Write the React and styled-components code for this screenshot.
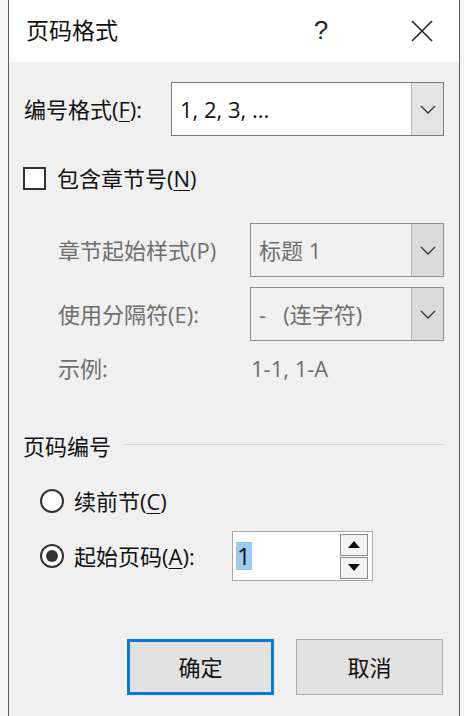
import React from 'react';
import styled, { createGlobalStyle } from 'styled-components';

const GlobalStyle = createGlobalStyle`
  html, body {
    margin: 0;
    padding: 0;
    background: #f7f7f7;
  }
  body {
    font-family: "Open Sans", "Noto Sans CJK SC", sans-serif;
    color: #111;
  }
`;

const Page = styled.div`
  display: flex;
  height: 716px;
  overflow: hidden;
`;

const Strip = styled.div`
  width: ${(p) => p.$width}px;
  flex-shrink: 0;
  background: #f5f5f5;
`;

const Dialog = styled.div`
  width: 450px;
  flex-shrink: 0;
  border-left: 1px solid #5c5c5c;
  border-right: 1px solid #5c5c5c;
  background: #f0f0f0;
  display: flex;
  flex-direction: column;
  font-size: 22px;
  line-height: 1.2;
`;

const TitleBar = styled.div`
  height: 62px;
  background: #ffffff;
  display: flex;
  align-items: center;
  padding-left: 17px;
`;

const Title = styled.div`
  flex: 1;
  font-size: 23px;
  color: #111;
`;

const TitleButton = styled.div`
  width: 46px;
  height: 46px;
  display: flex;
  align-items: center;
  justify-content: center;
  margin-right: ${(p) => p.$mr || 0}px;
  font-family: "Liberation Sans", sans-serif;
  font-size: 26px;
  color: #222;
`;

const Row = styled.div`
  display: flex;
  align-items: center;
  height: ${(p) => p.$h || 30}px;
  margin-top: ${(p) => p.$mt || 0}px;
  padding-left: ${(p) => p.$pl || 15}px;
  padding-right: 15px;
`;

const Label = styled.div`
  width: ${(p) => (p.$w ? `${p.$w}px` : 'auto')};
  flex-shrink: 0;
  white-space: nowrap;
  color: ${(p) => (p.$disabled ? '#6e6e6e' : '#111')};
`;

const Key = styled.span`
  text-decoration: underline;
  text-underline-offset: 3px;
  text-decoration-thickness: 1px;
`;

const Combo = styled.div`
  width: ${(p) => p.$w}px;
  height: 100%;
  box-sizing: border-box;
  display: flex;
  border: 1.5px solid ${(p) => (p.$disabled ? '#8e8e8e' : '#7a7a7a')};
  background: ${(p) => (p.$disabled ? '#f0f0f0' : '#ffffff')};
`;

const ComboText = styled.div`
  flex: 1;
  display: flex;
  align-items: center;
  padding-left: 8px;
  font-size: 22px;
  white-space: pre;
  color: ${(p) => (p.$disabled ? '#6e6e6e' : '#111')};
`;

const DropButton = styled.div`
  width: 31px;
  display: flex;
  align-items: center;
  justify-content: center;
  background: ${(p) => (p.$disabled ? '#dadada' : '#e3e3e3')};
  border-left: 1px solid #b5b5b5;
`;

const CheckBox = styled.div`
  width: 23px;
  height: 23px;
  box-sizing: border-box;
  border: 2px solid #333;
  background: #fff;
  margin-right: 11px;
`;

const Radio = styled.div`
  width: 24px;
  height: 24px;
  box-sizing: border-box;
  border: 2px solid #333;
  border-radius: 50%;
  background: #fff;
  display: flex;
  align-items: center;
  justify-content: center;
  margin-right: 10px;
  flex-shrink: 0;

  &::after {
    content: '';
    display: ${(p) => (p.$checked ? 'block' : 'none')};
    width: 12px;
    height: 12px;
    border-radius: 50%;
    background: #333;
  }
`;

const Section = styled.div`
  display: flex;
  align-items: center;
  height: 30px;
  margin-top: 48px;
  padding-left: 14px;
  padding-right: 15px;
`;

const Rule = styled.div`
  flex: 1;
  height: 1px;
  background: #d6d6d6;
  margin-left: 14px;
  margin-top: -4px;
`;

const Spinner = styled.div`
  width: 141px;
  height: 100%;
  box-sizing: border-box;
  border: 1px solid #a8a8a8;
  background: #fff;
  display: flex;
  align-items: center;
  padding: 0 4px 0 3px;
`;

const SpinValue = styled.div`
  flex: 1;
  display: flex;
  align-items: center;
`;

const Selected = styled.span`
  background: #9ccbf0;
  color: #111;
  font-size: 24px;
  line-height: 1.15;
  padding: 0 1px;
`;

const SpinButtons = styled.div`
  display: flex;
  flex-direction: column;
  gap: 1px;
`;

const SpinButton = styled.div`
  width: 28px;
  height: 22px;
  box-sizing: border-box;
  border: 1px solid #8c8c8c;
  background: #f2f2f2;
  display: flex;
  align-items: center;
  justify-content: center;
`;

const Footer = styled.div`
  display: flex;
  justify-content: flex-end;
  gap: 22px;
  margin-top: 58px;
  padding-right: 16px;
`;

const Button = styled.div`
  width: 147px;
  height: 56px;
  box-sizing: border-box;
  display: flex;
  align-items: center;
  justify-content: center;
  background: #e1e1e1;
  border: ${(p) => (p.$primary ? '3px solid #0a78d7' : '1px solid #adadad')};
  font-size: 22px;
  color: #111;
`;

const Chevron = () => (
  <svg width="16" height="9" viewBox="0 0 16 9">
    <path d="M1 1 L8 8 L15 1" fill="none" stroke="#333" strokeWidth="1.3" />
  </svg>
);

const CloseIcon = () => (
  <svg width="22" height="22" viewBox="0 0 22 22">
    <path d="M1 1 L21 21 M21 1 L1 21" stroke="#222" strokeWidth="1.6" />
  </svg>
);

const Triangle = ({ down }) => (
  <svg width="12" height="7" viewBox="0 0 12 7">
    <path d={down ? 'M0 0 L12 0 L6 7 Z' : 'M0 7 L12 7 L6 0 Z'} fill="#111" />
  </svg>
);

const App = () => {
  return (
    <>
      <GlobalStyle />
      <Page>
        <Strip $width={8} />

        <Dialog>
          <TitleBar>
            <Title>页码格式</Title>
            <TitleButton $mr={55}>?</TitleButton>
            <TitleButton $mr={14}>
              <CloseIcon />
            </TitleButton>
          </TitleBar>

          <Row $h={54} $mt={20}>
            <Label $w={147}>
              编号格式(<Key>F</Key>):
            </Label>
            <Combo $w={273}>
              <ComboText>1, 2, 3, ...</ComboText>
              <DropButton>
                <Chevron />
              </DropButton>
            </Combo>
          </Row>

          <Row $mt={27} $pl={14}>
            <CheckBox />
            <Label>
              包含章节号(<Key>N</Key>)
            </Label>
          </Row>

          <Row $h={54} $mt={30} $pl={49}>
            <Label $w={192} $disabled>
              章节起始样式(P)
            </Label>
            <Combo $w={194} $disabled>
              <ComboText $disabled>标题 1</ComboText>
              <DropButton $disabled>
                <Chevron />
              </DropButton>
            </Combo>
          </Row>

          <Row $h={54} $mt={10} $pl={49}>
            <Label $w={192} $disabled>
              使用分隔符(E):
            </Label>
            <Combo $w={194} $disabled>
              <ComboText $disabled>{'-   (连字符)'}</ComboText>
              <DropButton $disabled>
                <Chevron />
              </DropButton>
            </Combo>
          </Row>

          <Row $mt={12} $pl={49}>
            <Label $w={193} $disabled>
              示例:
            </Label>
            <Label $disabled>1-1, 1-A</Label>
          </Row>

          <Section>
            <Label>页码编号</Label>
            <Rule />
          </Section>

          <Row $mt={25} $pl={31}>
            <Radio />
            <Label>
              续前节(<Key>C</Key>)
            </Label>
          </Row>

          <Row $h={50} $mt={15} $pl={31}>
            <Radio $checked />
            <Label $w={158}>
              起始页码(<Key>A</Key>):
            </Label>
            <Spinner>
              <SpinValue>
                <Selected>1</Selected>
              </SpinValue>
              <SpinButtons>
                <SpinButton>
                  <Triangle />
                </SpinButton>
                <SpinButton>
                  <Triangle down />
                </SpinButton>
              </SpinButtons>
            </Spinner>
          </Row>

          <Footer>
            <Button $primary>确定</Button>
            <Button>取消</Button>
          </Footer>
        </Dialog>

        <Strip $width={5} />
      </Page>
    </>
  );
};

export default App;
